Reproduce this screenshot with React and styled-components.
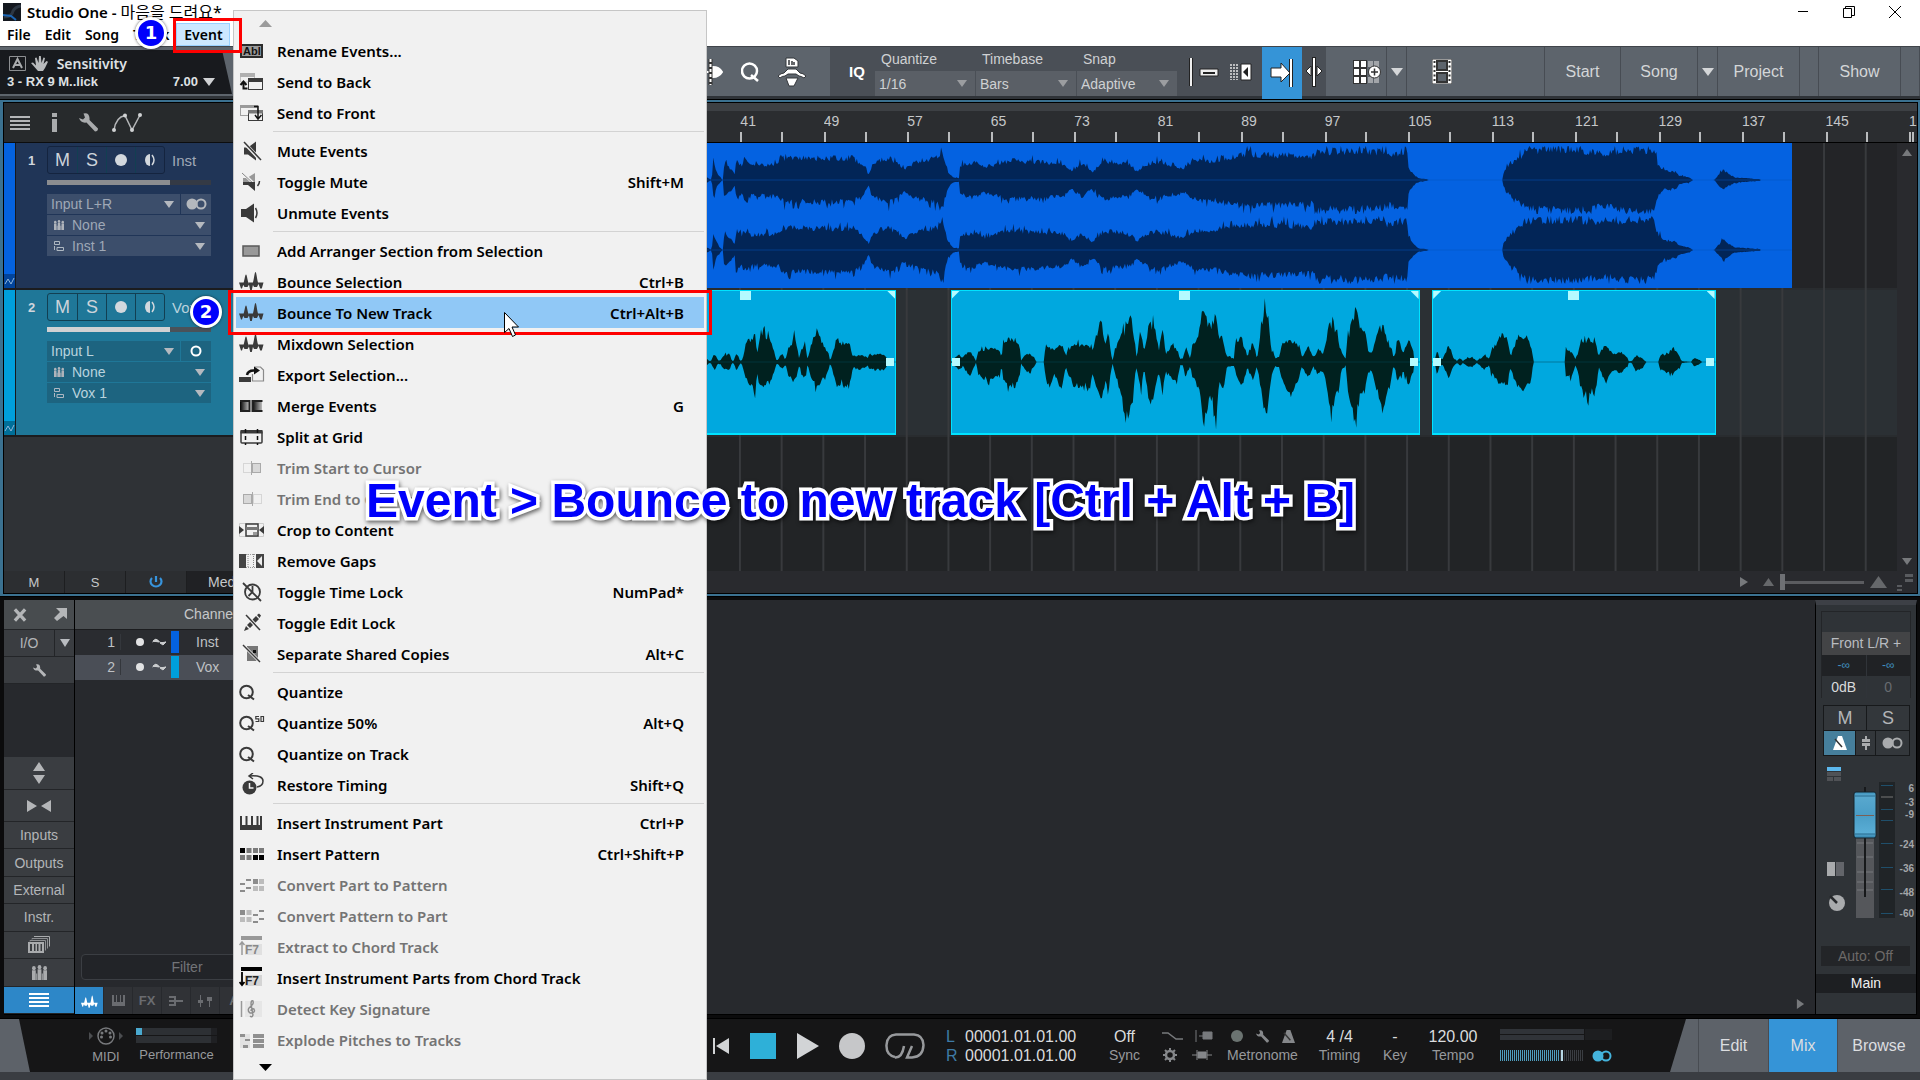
import React from 'react';
import styled, { createGlobalStyle, css } from 'styled-components';

const uiFont = '"Liberation Sans", "Noto Sans CJK KR", sans-serif';
const systemFont = '"Noto Sans", "Noto Sans CJK KR", sans-serif';

const GlobalStyle = createGlobalStyle`
  * { box-sizing: border-box; }
  body { margin: 0; background: #0b0b0c; font-family: ${uiFont}; font-size: 14px; color: #b9bcc0; }
  button, select, input { font: inherit; color: inherit; margin: 0; padding: 0; border: 0; background: none; border-radius: 0; }
  ul { list-style: none; margin: 0; padding: 0; }
  svg { display: block; flex: none; }
`;

/* ---------- data ---------- */

const TOTAL_BARS = 151;

const menuGroups = [
  [
    { label: 'Rename Events...', icon: 'rename' },
    { label: 'Send to Back', icon: 'back' },
    { label: 'Send to Front', icon: 'front' },
  ],
  [
    { label: 'Mute Events', icon: 'mute' },
    { label: 'Toggle Mute', icon: 'toggleMute', keys: 'Shift+M' },
    { label: 'Unmute Events', icon: 'unmute' },
  ],
  [
    { label: 'Add Arranger Section from Selection', icon: 'arranger' },
    { label: 'Bounce Selection', icon: 'bounce', keys: 'Ctrl+B' },
    { label: 'Bounce To New Track', icon: 'bounce', keys: 'Ctrl+Alt+B', active: true },
    { label: 'Mixdown Selection', icon: 'bounce' },
    { label: 'Export Selection...', icon: 'exportSel' },
    { label: 'Merge Events', icon: 'merge', keys: 'G' },
    { label: 'Split at Grid', icon: 'split' },
    { label: 'Trim Start to Cursor', icon: 'trimStart', disabled: true },
    { label: 'Trim End to Cursor', icon: 'trimEnd', disabled: true },
    { label: 'Crop to Content', icon: 'crop' },
    { label: 'Remove Gaps', icon: 'gaps' },
    { label: 'Toggle Time Lock', icon: 'timeLock', keys: 'NumPad*' },
    { label: 'Toggle Edit Lock', icon: 'editLock' },
    { label: 'Separate Shared Copies', icon: 'separate', keys: 'Alt+C' },
  ],
  [
    { label: 'Quantize', icon: 'quantize' },
    { label: 'Quantize 50%', icon: 'quantize50', keys: 'Alt+Q' },
    { label: 'Quantize on Track', icon: 'quantize' },
    { label: 'Restore Timing', icon: 'restore', keys: 'Shift+Q' },
  ],
  [
    { label: 'Insert Instrument Part', icon: 'keys', keys: 'Ctrl+P' },
    { label: 'Insert Pattern', icon: 'pattern', keys: 'Ctrl+Shift+P' },
    { label: 'Convert Part to Pattern', icon: 'toPattern', disabled: true },
    { label: 'Convert Pattern to Part', icon: 'toPart', disabled: true },
    { label: 'Extract to Chord Track', icon: 'chordUp', disabled: true },
    { label: 'Insert Instrument Parts from Chord Track', icon: 'chordDown' },
    { label: 'Detect Key Signature', icon: 'clef', disabled: true },
    { label: 'Explode Pitches to Tracks', icon: 'explode', disabled: true },
  ],
];

// [x, peak above the centre line, peak below it]
const instWave = [
  [-953, 8], [-600, 16], [-300, 20], [-60, 14], [18, 3], [30, 0], [34, 20], [45, 6], [58, 0], [62, 21], [75, 14], [88, 7],
  [92, 23], [105, 18], [120, 25], [130, 18], [200, 19], [210, 26], [300, 26], [390, 26], [410, 18], [428, 6], [435, 18],
  [450, 22], [478, 27], [500, 20], [520, 14], [540, 20], [560, 23], [600, 27], [613, 36], [620, 22], [628, 9], [640, 3],
  [655, 2], [657, 17], [690, 21], [720, 15], [780, 23], [850, 22], [920, 19], [940, 10], [965, 20], [993, 9], [1020, 23],
  [1090, 18], [1105, 10], [1130, 19], [1160, 22], [1220, 14], [1250, 23], [1290, 23], [1350, 28], [1400, 31], [1440, 29],
  [1470, 30], [1550, 28], [1562, 37], [1580, 34], [1717, 34], [1747, 30], [1788, 36], [1792, 15], [1802, 8], [1817, 2], [1839, 1],
  [1841, 0], [2029, 0], [2032, 8], [2047, 18], [2067, 24], [2087, 34], [2137, 36], [2217, 36], [2287, 31], [2347, 36],
  [2412, 34], [2422, 20], [2437, 11], [2467, 10], [2477, 5], [2502, 3], [2511, 0], [2565, 0], [2572, 4], [2587, 12],
  [2602, 7], [2617, 3], [2682, 1], [2683, 0], [2761, 0],
];

const voxA = [
  [-265, 0], [-200, 20], [-100, 14], [10, 6], [18, 4], [24, 1], [28, 1], [37, 10], [46, 2], [52, 2], [60, 8], [75, 9], [82, 1], [86, 2],
  [93, 10], [103, 1], [108, 3], [115, 19], [130, 27], [140, 35, 39], [145, 9], [150, 26], [163, 33, 27], [180, 24], [190, 9],
  [195, 1], [200, 4], [210, 9], [217, 2], [222, 14], [240, 28, 24], [250, 8], [252, 2], [257, 16], [268, 18], [272, 4], [276, 8],
  [282, 20], [297, 38, 31], [310, 22], [325, 11], [330, 1], [335, 8], [347, 28], [360, 22], [378, 20, 30], [388, 6], [392, 7],
  [405, 9], [420, 6], [424, 3], [428, 8], [445, 9], [465, 9], [473, 5], [474, 0], [497, 0],
];

const voxB = [
  [636, 0], [652, 8], [658, 8], [666, 5], [683, 14, 17], [695, 5], [699, 1], [705, 14], [720, 14, 19], [742, 16, 21], [760, 14],
  [764, 4], [768, 24], [780, 26], [800, 27, 29], [810, 15], [813, 2], [820, 7], [832, 10, 13], [845, 6], [852, 0], [870, 0],
  [875, 19], [885, 16, 28], [895, 15], [915, 19, 28], [926, 6], [930, 14], [950, 22, 28], [965, 19, 28], [988, 18, 28], [992, 14],
  [1003, 30, 28], [1015, 40, 48], [1025, 24], [1033, 33, 36], [1042, 4], [1044, 2], [1050, 15], [1065, 34], [1072, 33, 58],
  [1080, 41, 54], [1090, 52, 58], [1097, 36], [1102, 10], [1105, 6], [1110, 20], [1115, 40, 33], [1124, 8], [1130, 30],
  [1137, 44, 50], [1150, 42, 38], [1160, 12], [1170, 38, 36], [1178, 10], [1185, 14], [1195, 22], [1205, 13, 26], [1215, 4],
  [1222, 4], [1228, 18], [1240, 4], [1245, 17], [1258, 28], [1265, 40], [1272, 66, 74], [1285, 43, 48], [1295, 42], [1303, 60, 72],
  [1312, 26], [1325, 22, 30], [1332, 6], [1340, 5], [1350, 4], [1355, 26, 13], [1370, 27], [1385, 6], [1390, 16], [1402, 17],
  [1408, 4], [1412, 14], [1422, 48, 45], [1433, 62, 60], [1445, 14], [1455, 5], [1465, 6], [1470, 21], [1485, 24, 32],
  [1495, 25, 38], [1515, 18], [1522, 5], [1537, 20], [1552, 5], [1562, 15], [1575, 10], [1579, 15], [1589, 40, 50],
  [1599, 48, 54], [1612, 29, 37], [1622, 10], [1632, 4], [1637, 28], [1647, 44, 54], [1657, 64, 68], [1667, 42],
  [1680, 38, 34], [1690, 10], [1697, 10], [1712, 32, 34], [1725, 44, 58], [1737, 24, 38], [1749, 16], [1753, 3], [1765, 26, 23],
  [1777, 10], [1792, 27], [1804, 10], [1805, 0], [1820, 0],
];

const voxC = [
  [1851, 0], [1857, 0], [1864, 14], [1871, 3], [1879, 4], [1892, 19], [1905, 5], [1915, 1], [1922, 5], [1929, 1], [1937, 4],
  [1952, 6], [1964, 1], [1972, 4], [1985, 8], [1995, 4], [2002, 14], [2017, 24, 22], [2029, 34, 27], [2042, 26], [2050, 6],
  [2062, 23, 26], [2077, 29, 33], [2089, 32, 29], [2102, 20], [2107, 4], [2108, 0], [2187, 0], [2190, 14], [2202, 13, 19],
  [2214, 4], [2219, 8], [2227, 25, 30], [2247, 26, 40], [2267, 22, 31], [2273, 6], [2282, 15], [2292, 21, 26], [2302, 13],
  [2312, 10], [2332, 11, 13], [2347, 4], [2349, 1], [2357, 1], [2367, 7, 11], [2382, 5, 7], [2394, 0], [2424, 0], [2429, 9],
  [2447, 9, 13], [2462, 17, 12], [2477, 7], [2484, 1], [2507, 0], [2515, 5], [2527, 3], [2535, 0], [2569, 0],
];

const tracks = [
  {
    number: 1, name: 'Inst', tone: 'inst', input: 'Input L+R', stereo: true, output: 'Inst 1',
    clips: [{ from: 1, to: 141.9, span: [-953, 2761], wave: instWave, centers: [37, 107], cap: 34 }],
  },
  {
    number: 2, name: 'Vox', tone: 'vox', input: 'Input L', stereo: false, output: 'Vox 1',
    clips: [
      { from: 27.1, to: 56, span: [-265, 497], wave: voxA, centers: [72], cap: 69 },
      { from: 61.2, to: 106.2, span: [636, 1820], wave: voxB, centers: [72], cap: 69 },
      { from: 107.4, to: 134.6, span: [1851, 2569], wave: voxC, centers: [72], cap: 69 },
    ],
  },
];

const tones = {
  inst: { strip: '#0462df', header: '#203557', field: '#3c4e6b', clip: '#0462e1', wave: '#022557', line: '#0353bd', text: '#9fa8b6', level: '#8b8d90', rest: '#343a45', edge: '#14243f' },
  vox: { strip: '#009fdb', header: '#1f7798', field: '#1d6480', clip: '#00a8df', wave: '#00211f', line: '#044a56', text: '#b9d3de', level: '#d0d1d3', rest: '#4a5259', edge: '#123f52' },
};

/* ---------- wave form ---------- */

function makeRandom(seed) {
  let s = seed * 7919 + 101;
  return () => {
    s = (s * 16807) % 2147483647;
    return s / 2147483647;
  };
}

function envelopePath(points, center, cap, seed) {
  const random = makeRandom(seed);
  // most samples sit a little under the envelope, a few poke out of it
  const noise = () => 0.72 + 0.24 * random() + (random() > 0.9 ? 0.22 : 0);
  const up = [];
  const down = [];
  let i = 0;
  const last = points[points.length - 1][0];
  for (let x = points[0][0]; x < last; x += 3) {
    while (points[i + 1][0] <= x) i += 1;
    const [x0, u0, d0 = u0] = points[i];
    const [x1, u1, d1 = u1] = points[i + 1];
    const t = (x - x0) / (x1 - x0);
    up.push(`${x} ${(center - Math.min(cap, (u0 + (u1 - u0) * t) * noise())).toFixed(1)}`);
    down.push(`${x} ${(center + Math.min(cap, (d0 + (d1 - d0) * t) * noise())).toFixed(1)}`);
  }
  return `M${up.join('L')}L${down.reverse().join('L')}Z`;
}

/* ---------- icons ---------- */

const dark = '#3a3a3a';

const waveShape = 'M0 12.5h5L3 18.5H2zM4 14.5C5.500 11 6 4.500 7 4.500S8.500 11 10 14.500L8.500 17H5.500zM9.500 12.500h5L12.800 20h-1.600zM13.500 14C15 10 15.500 2 16.500 2S18 10 19.500 14L18 17h-3zM19 12.500h5.500L22.800 18.500h-1.600z';

const menuIcons = {
  rename: (
    <>
      <rect x="2" y="6" width="21" height="12" fill="#9a9a9a" stroke="#2c2c2c" strokeWidth="2" />
      <text x="4" y="16" fontSize="11" fontFamily="Liberation Sans" fill="#111">Abl</text>
    </>
  ),
  back: (
    <>
      <path d="M1.500 4h14v8h-14z" fill="none" stroke="#c2c2c2" />
      <path d="M1 3h15v4H1z" fill="#b0b0b0" />
      <rect x="9.500" y="8.500" width="14" height="11" fill="#f1f1f1" stroke={dark} />
      <path d="M9 8h15v4H9z" fill={dark} />
      <path d="M4.500 12v6.500h4M1.500 15l3-3.500 3 3.500" fill="none" stroke="#111" strokeWidth="2" />
    </>
  ),
  front: (
    <>
      <rect x="1.500" y="4.500" width="17" height="10" fill="#f1f1f1" stroke="#a0a0a0" />
      <path d="M1 4h18v3H1z" fill="#9a9a9a" />
      <rect x="9.500" y="9.500" width="14" height="10" fill="#f1f1f1" stroke={dark} />
      <path d="M9 9h15v3.500H9z" fill="#777" />
      <path d="M15 5.500h4V17M16 14l3 4 3.500-4" fill="none" stroke="#111" strokeWidth="1.500" />
    </>
  ),
  mute: (
    <>
      <path d="M5 8.500h4l8-6v19l-8-6H5z" fill={dark} />
      <path d="M5 3.500l17 18" stroke="#f1f1f1" strokeWidth="3.500" />
      <path d="M5 3l17 18" stroke={dark} strokeWidth="1.500" />
    </>
  ),
  toggleMute: (
    <>
      <path d="M4 8h4l8-5v9H4z" fill="#999" />
      <path d="M4 3l12 12" stroke="#f1f1f1" strokeWidth="3" />
      <path d="M3 3l13 12" stroke="#888" />
      <path d="M4 12h12v9l-7-6H4z" fill={dark} />
      <path d="M18.500 16q2-2 2-5" fill="none" stroke={dark} strokeWidth="1.500" />
    </>
  ),
  unmute: (
    <>
      <path d="M2 8h5l8-5.500v19L7 16H2z" fill={dark} />
      <path d="M16.500 7q3 5 0 10" fill="none" stroke={dark} strokeWidth="1.500" />
    </>
  ),
  arranger: <rect x="4" y="7" width="16" height="10" fill="#999" stroke="#5a5a5a" strokeWidth="1.500" />,
  bounce: <path d={waveShape} fill={dark} />,
  exportSel: (
    <>
      <path d="M15.500 4h6l3 3v11h-11v-7" fill="#f1f1f1" stroke="#8a8a8a" strokeWidth="1.200" />
      <path d="M0 14h12v5H0z" fill={dark} />
      <path d="M8 12q1-5 8-4.500" fill="none" stroke="#111" strokeWidth="2.500" />
      <path d="M15 3.500l6 4-6 4z" fill="#111" />
    </>
  ),
  merge: (
    <>
      <defs>
        <linearGradient id="mergeA"><stop offset="0" stopColor="#000" /><stop offset="1" stopColor="#bbb" /></linearGradient>
        <linearGradient id="mergeB"><stop offset="0" stopColor="#111" /><stop offset="1" stopColor="#bbb" /></linearGradient>
      </defs>
      <rect x="1" y="7" width="9" height="10" fill="url(#mergeA)" />
      <rect x="14" y="7" width="9" height="10" fill="url(#mergeB)" />
      <path d="M1 7h9.500v10H1M23.500 7H13.500v10h10" fill="none" stroke="#222" strokeWidth="2" />
    </>
  ),
  split: (
    <>
      <rect x="2" y="6" width="21" height="12" fill="none" stroke={dark} strokeWidth="1.500" rx="1" />
      <path d="M1.500 5h22v3.500h-22z" fill={dark} />
      <path d="M6.500 4v16M18.500 4v16" stroke="#111" strokeWidth="1.500" strokeDasharray="4 3" />
    </>
  ),
  trimStart: (
    <>
      <path d="M4.500 7.500h8v9h-8z" fill="none" stroke="#bbb" strokeDasharray="1 1" />
      <rect x="13.500" y="7.500" width="8" height="9" fill="#d8d8d8" stroke="#aaa" />
      <path d="M12.500 5v14" stroke="#aaa" />
    </>
  ),
  trimEnd: (
    <>
      <path d="M14.500 7.500h8v9h-8z" fill="none" stroke="#bbb" strokeDasharray="1 1" />
      <rect x="4.500" y="7.500" width="8" height="9" fill="#d8d8d8" stroke="#aaa" />
      <path d="M13.500 5v14" stroke="#aaa" />
    </>
  ),
  crop: (
    <>
      <path d="M.5 5.500h24v13h-24z" fill="none" stroke="#ccc" />
      <rect x="7" y="6" width="12" height="12" fill="#f1f1f1" stroke={dark} strokeWidth="1.500" />
      <path d="M7 9h12v3H7z" fill="#777" />
      <path d="M14 14h4v3h-4z" fill="#999" />
      <path d="M0 8l5 4-5 4zM25 8l-5 4 5 4z" fill={dark} />
    </>
  ),
  gaps: (
    <>
      <path d="M0 5h7v14H0zM17 5h8v14h-8z" fill="#444" />
      <path d="M9 5v14M14.500 5v14" stroke="#888" strokeDasharray="1 1" />
      <path d="M7 5.500h10M7 18.500h10" stroke="#999" strokeDasharray="1 1" />
      <path d="M23 7v10l-5-5z" fill="#eee" />
    </>
  ),
  timeLock: (
    <>
      <circle cx="13.500" cy="12" r="7.500" fill="none" stroke={dark} strokeWidth="1.800" />
      <path d="M13.500 6v6l-4 4M4 3l18 18" fill="none" stroke={dark} strokeWidth="1.800" />
    </>
  ),
  editLock: (
    <>
      <path d="M5 20l2-5 3 3zM8 14l9-9 3 3-9 9zM18 4l2-1.500 2 2L20.500 7z" fill={dark} />
      <path d="M7 4l14 15" stroke="#f1f1f1" strokeWidth="3.500" />
      <path d="M7 4l14 15" stroke={dark} strokeWidth="1.500" />
    </>
  ),
  separate: (
    <>
      <path d="M8 4h11v13l-2 2H8z" fill="#777" />
      <rect x="14" y="8" width="3" height="3" fill="#111" />
      <path d="M4 3l17 17" stroke="#f1f1f1" strokeWidth="3" />
      <path d="M4 3l17 17" stroke={dark} strokeWidth="1.500" />
    </>
  ),
  quantize: (
    <>
      <circle cx="7.500" cy="12" r="6.300" fill="none" stroke={dark} strokeWidth="2" />
      <path d="M9 15l6 4.500" stroke={dark} strokeWidth="2" />
    </>
  ),
  quantize50: (
    <>
      <circle cx="7.500" cy="12" r="6.300" fill="none" stroke={dark} strokeWidth="2" />
      <path d="M9 15l6 4.500" stroke={dark} strokeWidth="2" />
      <path d="M20 5.500h-3.200v2.300h3v2.700h-3.300M22 5.500h2.500v5H22z" fill="none" stroke={dark} strokeWidth="1.200" />
    </>
  ),
  restore: (
    <>
      <circle cx="10.500" cy="14.500" r="7" fill={dark} />
      <path d="M10.500 10v5h4" fill="none" stroke="#f1f1f1" strokeWidth="1.500" />
      <path d="M11 3q13-1 13 5 0 5-6 6M14 0l-4 3 4 3" fill="none" stroke={dark} strokeWidth="1.500" />
    </>
  ),
  keys: <path d="M1 5h2v9h3.500V5h2v9H12V5h2v9h3.500V5h2v9H21V5h2v14H1z" fill={dark} />,
  pattern: (
    <>
      <path d="M1 6h5v5H1zM14 13h5v5h-5zM20 13h5v5h-5z" fill="#000" />
      <path d="M7.500 6h5v5h-5zM14 6h5v5h-5zM20 6h5v5h-5zM1 13h5v5H1zM7.500 13h5v5h-5z" fill="#7b7b7b" />
    </>
  ),
  toPattern: (
    <>
      <path d="M1 10h5v2H1zM7 6h5v2H7zM7 14h5v2H7zM1 17h5v2H1zM14 6h5v5h-5z" fill="#8c8c8c" />
      <path d="M20 6h5v5h-5zM14 13h5v5h-5zM20 13h5v5h-5z" fill="#bcbcbc" />
    </>
  ),
  toPart: (
    <>
      <path d="M1 6h5v5H1zM14 10h5v2h-5zM20 6h5v2h-5zM20 14h5v2h-5zM14 17h5v2h-5z" fill="#8c8c8c" />
      <path d="M7.500 6h5v5h-5zM1 13h5v5H1zM7.500 13h5v5h-5z" fill="#bcbcbc" />
    </>
  ),
  chordUp: (
    <>
      <path d="M6 9h17v11H6z" fill="#e0e0e0" />
      <path d="M2 1h21v4H2z" fill="#999" />
      <path d="M3 20V8M.5 10L3 7l2.500 3" fill="none" stroke="#999" strokeWidth="1.500" />
      <text x="6" y="19" fontSize="12" fontFamily="Liberation Sans" fill="#888">F7</text>
    </>
  ),
  chordDown: (
    <>
      <path d="M6 9h17v11H6z" fill="#d4d4d4" />
      <path d="M2 1h21v4H2z" fill="#000" />
      <path d="M3 6v12M.5 16L3 19l2.500-3" fill="none" stroke="#000" strokeWidth="1.800" />
      <text x="6" y="19" fontSize="12" fontFamily="Liberation Sans" fill="#222">F7</text>
    </>
  ),
  clef: (
    <>
      <path d="M6 4h17v16H6z" fill="#e6e6e6" />
      <path d="M2.500 4v16" stroke="#999" strokeWidth="1.500" />
      <path d="M11 19q2 2 3-1L12 7q0-4 2-3 1 3-2 5-5 4-1 7 6 0 4-4-3-1-3 2" fill="none" stroke="#8c8c8c" strokeWidth="1.400" />
    </>
  ),
  explode: (
    <>
      <path d="M1 6h10v14H1z" fill="#e2e2e2" />
      <path d="M1 6h5v3H1zM6 11h5v2H6zM4 17h5v3H4zM14 6h11v4H14zM14 11h11v4H14zM14 16h11v4H14z" fill="#909090" />
    </>
  ),
};

const MenuIcon = ({ name }) => (
  <svg width="26" height="24" viewBox="0 0 26 24" aria-hidden="true">{menuIcons[name]}</svg>
);

const shapes = {
  down: 'M0 0h10L5 8z',
  up: 'M0 8h10L5 0z',
  right: 'M1 0l8 4-8 4z',
};

const Triangle = ({ dir = 'down', w = 10, h = 8, color = '#b9bcc0' }) => (
  <svg width={w} height={h} viewBox="0 0 10 8" preserveAspectRatio="none" aria-hidden="true">
    <path d={shapes[dir]} fill={color} />
  </svg>
);

const Bars = ({ color = '#b4b6b8' }) => (
  <svg width="20" height="14" viewBox="0 0 20 14"><path d="M0 0h20v2H0zM0 4h20v2H0zM0 8h20v2H0zM0 12h20v2H0z" fill={color} /></svg>
);

const Wrench = ({ size = 19, color = '#a9abad' }) => (
  <svg width={size} height={size} viewBox="0 0 19 19">
    <path d="M0 5l4 1.500 2-2L4.500.5Q10-1 10.500 5v2L19 15.500q0 3-3 3L7.500 9.500Q2 10.500 0 5z" fill={color} />
  </svg>
);

const People = ({ size = 16, color = '#aeb3ba' }) => (
  <svg width={size} height={size} viewBox="0 0 16 14" preserveAspectRatio="none">
    <path d="M0 5h4v9H0zM6 4h4v10H6zM12 5h4v9h-4zM4.500 8h1v6h-1zM10.500 8h1v6h-1z" fill={color} />
    <circle cx="2" cy="3" r="2" fill={color} />
    <circle cx="8" cy="2" r="2" fill={color} />
    <circle cx="14" cy="3" r="2" fill={color} />
  </svg>
);

const Blocks = () => (
  <svg width="10" height="10" viewBox="0 0 10 10"><path d="M.5.5h5v3h-5zM.5 5v4M3 6.500h6.500v3H3z" fill="none" stroke="#aeb8c2" /></svg>
);

const Rings = ({ color = '#b4b8bd', stereo = true }) => (
  <svg width="21" height="12" viewBox="0 0 21 12">
    {stereo && <circle cx="6" cy="6" r="5.500" fill={color} />}
    <circle cx={stereo ? 15 : 10} cy="6" r="4.500" fill="none" stroke={color} strokeWidth="2" />
  </svg>
);

const Metronome = ({ color = '#a0a2a4', size = 14 }) => (
  <svg width={size} height={size} viewBox="0 0 14 14">
    <path d="M5 0h4l5 14H0z" fill={color} />
    <path d="M2 3l7 8" stroke="#333" strokeWidth="1.500" />
  </svg>
);

const WaveMark = () => (
  <svg width="17" height="14" viewBox="0 0 25 20"><path d={waveShape} fill="#fff" /></svg>
);

/* ---------- window chrome ---------- */

const Screen = styled.div`
  position: relative;
  display: flex;
  flex-direction: column;
  min-height: 100vh;
  overflow: hidden;
`;

const TitleBar = styled.header`
  display: flex;
  align-items: center;
  height: 23px;
  padding: 0 19px 0 3px;
  gap: 6px;
  background: #fff;
  color: #000;
  font: 600 15px/20px ${systemFont};
`;

const SongName = styled.span`
  font-size: 16px;
  font-weight: 400;
`;

const WindowButtons = styled.div`
  display: flex;
  gap: 34px;
  margin-left: auto;
`;

const PlainButton = styled.button`
  display: flex;
  align-items: center;
  justify-content: center;
  cursor: pointer;
`;

const MenuBar = styled.nav`
  display: flex;
  height: 23px;
  background: #fff;
  color: #000;
  font: 600 14px/20px ${systemFont};
`;

const MenuBarItem = styled.button`
  padding: 0 6px;
  border: 1px solid ${(p) => (p.$open ? '#99d1ff' : 'transparent')};
  background: ${(p) => (p.$open ? '#cce8ff' : 'none')};
  min-width: ${(p) => (p.$open ? '54px' : '0')};
`;

/* ---------- toolbar ---------- */

const Toolbar = styled.div`
  display: flex;
  height: 53px;
  border-top: 1px solid #40444a;
  border-bottom: 3px solid #2f3338;
  background: #5d646c;
`;

const ParameterBox = styled.div`
  display: flex;
  flex-direction: column;
  justify-content: center;
  gap: 1px;
  width: 232px;
  margin: 3px 0 2px;
  padding: 0 17px 0 7px;
  background: #181a1e;
  clip-path: polygon(0 0, 222px 0, 100% 100%, 0 100%);
  color: #dfe1e4;
  font-weight: bold;
  font-size: 13px;
  line-height: 16px;
`;

const ParameterRow = styled.div`
  display: flex;
  align-items: center;
  gap: 5px;
`;

const ParameterTitle = styled(ParameterRow)`
  padding-left: 2px;
  font: 600 14px/18px ${systemFont};
`;

const Push = styled.span`
  margin-left: auto;
`;

const ToolStrip = styled.div`
  display: flex;
  align-items: center;
  justify-content: flex-end;
  gap: 18px;
  width: 598px;
  padding-right: 23px;
`;

const SnapStrip = styled.div`
  display: flex;
  align-items: center;
  width: 432px;
  padding-left: 12px;
  background: #4a4f56;
`;

const IqMark = styled.span`
  width: 33px;
  padding-left: 7px;
  color: #fff;
  font-weight: bold;
  font-size: 15px;
`;

const Field = styled.label`
  display: flex;
  flex-direction: column;
  justify-content: flex-end;
  align-self: stretch;
  width: 101px;
  padding-right: 1px;
  color: #cfd1d3;
  line-height: 24px;
`;

const FieldName = styled.span`
  padding-left: 6px;
`;

const SelectBox = styled.span`
  display: grid;
  flex: 1 1 auto;
  align-items: center;
  background: ${(p) => p.$bg || 'none'};
  & > * { grid-area: 1 / 1; }
  & > svg { justify-self: end; margin-right: ${(p) => p.$caret || 6}px; pointer-events: none; }
`;

const Select = styled.select`
  appearance: none;
  width: 100%;
  height: ${(p) => p.$h || 24}px;
  padding-left: ${(p) => p.$indent || 4}px;
`;

const SnapTools = styled.div`
  display: flex;
  align-items: center;
  gap: 11px;
  padding-left: 11px;
`;

const SnapToggle = styled(PlainButton)`
  width: 40px;
  margin-bottom: -3px;
  background: #3594d7;
`;

const SnapSplit = styled(PlainButton)`
  width: 24px;
  background: #4a4f56;
`;

const ToolCell = styled.button`
  display: flex;
  align-items: center;
  justify-content: center;
  width: ${(p) => p.$w}px;
  padding-left: ${(p) => p.$pl || 0}px;
  padding-top: 1px;
  border-right: 1px solid #474c53;
  color: #d4d6d8;
  font-size: 16px;
`;

const ToolSpace = styled.div`
  flex: 1;
  display: flex;
  align-items: center;
  padding-left: 25px;
  border-right: 1px solid #474c53;
`;

/* ---------- arrangement ---------- */

const Arrange = styled.section`
  display: flex;
  margin-top: 1px;
  border: solid #3b7190;
  border-width: 2px 2px 2px 3px;
  outline: 1px solid #000;
  background: #000;
  padding: 1px;
`;

const TrackList = styled.div`
  display: flex;
  flex-direction: column;
  flex: none;
  width: 319px;
`;

const TrackTools = styled.div`
  display: flex;
  align-items: center;
  gap: 22px;
  height: 40px;
  padding-left: 6px;
  border-bottom: 1px solid #0c0d0e;
  background: #272a2c;
`;

const ToolPair = styled.div`
  display: flex;
  align-items: center;
  gap: 14px;
`;

const TrackHeader = styled.div`
  display: flex;
  height: 147px;
  border-bottom: 2px solid #1b1c1f;
  background: ${(p) => p.$tone.header};
  color: ${(p) => p.$tone.text};
`;

const TrackStrip = styled.div`
  display: flex;
  align-items: flex-end;
  width: 12px;
  border-right: 1px solid #15181d;
  background: ${(p) => p.$tone.strip};
`;

const TrackNumber = styled.strong`
  width: 31px;
  padding-top: 10px;
  text-align: center;
  font-size: 13px;
  line-height: 16px;
  color: #d0d6dd;
`;

const TrackBody = styled.div`
  display: flex;
  flex-direction: column;
  width: 164px;
  padding-top: 3px;
`;

const TrackRow = styled.div`
  display: flex;
  align-items: center;
  gap: 7px;
  font-size: 15px;
`;

const ButtonGroup = styled.div`
  display: flex;
  height: 28px;
  border: 1px solid ${(p) => p.$tone.edge};
  border-radius: 3px;
  color: #cdd3da;
  font-size: 18px;
`;

const GroupButton = styled(PlainButton)`
  width: 29px;
  & + & { border-left: 1px solid ${(p) => p.$tone.edge}; }
`;

const Level = styled.div`
  width: 164px;
  height: 5px;
  margin: 6px 0 9px;
  background: linear-gradient(90deg, ${(p) => p.$tone.level} 75%, ${(p) => p.$tone.rest} 75%);
`;

const InputRow = styled.div`
  display: flex;
  gap: 1px;
  margin-bottom: 1px;
`;

const RouteRow = styled.div`
  display: flex;
  align-items: center;
  height: 20px;
  margin-bottom: 1px;
  padding-left: 7px;
  gap: 2px;
  background: ${(p) => p.$tone.field};
`;

const RingButton = styled(PlainButton)`
  width: 30px;
  background: ${(p) => p.$tone.field};
`;

const TrackFill = styled.div`
  flex: 1;
  min-height: 134px;
  background: #2f3236;
`;

const TrackFooter = styled.div`
  display: flex;
  height: 22px;
  background: #202124;
  color: #c6c8ca;
  font-size: 13px;
`;

const FooterButton = styled(PlainButton)`
  width: 61px;
  border-right: 1px solid #1d1e20;
  background: #2c2e31;
`;

const FooterTab = styled(PlainButton)`
  padding-left: 21px;
  font-size: 14px;
`;

const Timeline = styled.div`
  display: flex;
  flex-direction: column;
  flex: 1;
  min-width: 0;
`;

const Ruler = styled.div`
  display: grid;
  grid-template-columns: repeat(19, 1fr) 8px;
  height: 40px;
  border-top: 8px solid #3d4044;
  border-bottom: 1px solid #000;
  background: #2b2d30;
  color: #c5c7c9;
`;

const RulerCell = styled.div`
  overflow: hidden;
  line-height: 21px;
  background:
    linear-gradient(#b9bbbd, #b9bbbd) 0 100% / 2px 10px no-repeat,
    linear-gradient(#b9bbbd, #b9bbbd) 50% 100% / 2px 10px no-repeat;
`;

const LaneRow = styled.div`
  display: flex;
  flex: 1;
`;

const Lanes = styled.div`
  position: relative;
  flex: 1;
  background: #222426;
`;

const GridLines = styled.svg`
  position: absolute;
  inset: 0;
  width: 100%;
  height: 100%;
`;

const Lane = styled.div`
  height: 147px;
  border-bottom: 2px solid #292c2f;
  background: ${(p) => (p.$selected ? '#2b3034' : '#232427')};
`;

const ClipLayer = styled.div`
  position: absolute;
  top: ${(p) => p.$index * 147}px;
  left: 0;
  right: 0;
  height: 145px;
`;

const Clip = styled.div`
  position: absolute;
  top: 0;
  bottom: 0;
  background: ${(p) => p.$tone.clip};
  ${(p) => p.$selected && css`
    box-shadow: inset 0 -2px #00e3ff, inset 0 0 0 1px #00e3ff;
  `}
`;

const Wave = styled.svg`
  width: 100%;
  height: 100%;
`;

const Handle = styled.i`
  position: absolute;
  background: #b4faff;
  ${(p) => p.$at === 'top' && css`top: 1px; left: calc(50% - 6px); width: 11px; height: 9px;`}
  ${(p) => p.$at === 'left' && css`top: 68px; left: 1px; width: 8px; height: 8px;`}
  ${(p) => p.$at === 'right' && css`top: 68px; right: 2px; width: 8px; height: 8px;`}
  ${(p) => p.$at === 'fadeIn' && css`top: 1px; left: 1px; width: 8px; height: 8px; clip-path: polygon(0 0, 100% 0, 0 100%);`}
  ${(p) => p.$at === 'fadeOut' && css`top: 1px; right: 1px; width: 8px; height: 8px; clip-path: polygon(0 0, 100% 0, 100% 100%);`}
`;

const ScrollColumn = styled.div`
  display: flex;
  flex-direction: column;
  align-items: center;
  justify-content: space-between;
  width: 20px;
  padding: 6px 0;
  background: #292a2e;
`;

const TimelineFooter = styled.div`
  display: flex;
  align-items: center;
  justify-content: flex-end;
  gap: 6px;
  height: 22px;
  padding-right: 4px;
  background: #292a2e;
`;

const ZoomOut = styled(PlainButton)`
  padding-left: 8px;
`;

const ZoomSlider = styled.input`
  appearance: none;
  width: 84px;
  height: 16px;
  background: linear-gradient(#5b5c60, #5b5c60) 0 50% / 100% 3px no-repeat;
  &::-webkit-slider-thumb {
    appearance: none;
    width: 5px;
    height: 16px;
    background: #6e7074;
  }
`;

/* ---------- mixer ---------- */

const Mixer = styled.section`
  display: flex;
  flex: 1;
  margin: 4px 3px 3px 4px;
  border-bottom: 1px solid #000;
  background: #27292d;
`;

const SideColumn = styled.div`
  display: flex;
  flex-direction: column;
  width: 71px;
  border-right: 1px solid #000;
`;

const SideCell = styled(PlainButton)`
  flex: ${(p) => (p.$h ? 'none' : '1 1 auto')};
  height: ${(p) => p.$h || 26}px;
  border-bottom: 1px solid #232528;
  background: ${(p) => p.$bg || '#3a3d41'};
  color: #b3b5b8;
`;

const SideHead = styled.div`
  display: flex;
  align-items: center;
  justify-content: space-between;
  height: 30px;
  padding: 0 7px 0 9px;
  border-bottom: 1px solid #232528;
  background: #484c4f;
`;

const SideSplit = styled.div`
  display: flex;
  height: 27px;
  border-bottom: 1px solid #232528;
  background: #3a3d41;
`;

const IoButton = styled(PlainButton)`
  flex: 1;
  border-right: 1px solid #232528;
  color: #b3b5b8;
`;

const IoList = styled(PlainButton)`
  width: 19px;
`;

const SideGap = styled.div`
  height: 73px;
`;

const ChannelColumn = styled.div`
  display: flex;
  flex-direction: column;
  width: 280px;
`;

const ChannelHead = styled.div`
  height: 30px;
  padding-left: 109px;
  border-bottom: 1px solid #1c1d1f;
  background: #4a4e51;
  line-height: 29px;
  color: #c6c8ca;
`;

const ChannelRow = styled.div`
  display: flex;
  align-items: center;
  height: 25px;
  padding-bottom: 2px;
  background: ${(p) => (p.$selected ? '#4a4e56' : '#2a2c30')};
  color: #bfc1c4;
`;

const ChannelNumber = styled.span`
  width: 46px;
  padding-right: 5px;
  margin-right: 15px;
  border-right: 1px solid #34373c;
  text-align: right;
`;

const ChannelColor = styled.i`
  width: 8px;
  align-self: stretch;
  margin: 1px 17px 0 5px;
  background: ${(p) => p.$color};
`;

const Filter = styled.input`
  width: 212px;
  height: 26px;
  margin: auto 6px 7px;
  border: 1px solid #3b3e43;
  border-radius: 4px;
  background: #222428;
  text-align: center;
  &::placeholder { color: #727478; opacity: 1; }
`;

const ChannelTabs = styled.div`
  display: flex;
  gap: 1px;
`;

const ChannelTab = styled(PlainButton)`
  width: 28px;
  height: 27px;
  background: ${(p) => (p.$active ? '#2d87c8' : '#303236')};
  color: #6a6c70;
  font-weight: bold;
  font-size: 13px;
`;

const MixerSpace = styled.div`
  display: flex;
  flex: 1;
  align-items: flex-end;
  justify-content: flex-end;
  padding: 5px 10px;
`;

const MainChannel = styled.div`
  display: flex;
  flex-direction: column;
  width: 102px;
  padding-bottom: 21px;
  border: solid #000;
  border-width: 0 1px;
  border-top: 5px solid #3d4046;
  background: #2f3337;
`;

const OutputBox = styled.div`
  margin: 6px 5px 0;
  border: 1px solid #232528;
  border-bottom: 0;
`;

const OutputName = styled.div`
  margin-top: 20px;
  background: #434446;
  line-height: 23px;
  text-align: center;
  white-space: nowrap;
`;

const Pair = styled.div`
  display: flex;
  background: ${(p) => p.$bg || 'none'};
  & > * { flex: 1; text-align: center; line-height: ${(p) => p.$line}px; }
  & > * + * { border-left: 1px solid #303439; }
`;

const PeakValue = styled.span`
  color: #3f8dbd;
  font-size: 12px;
`;

const Volume = styled.span`
  color: #d8dadc;
`;

const Muted = styled.span`
  color: #686b70;
`;

const MainButtons = styled.div`
  margin: 7px 6px 11px 7px;
  border: 1px solid #17191b;
  color: #b3b5b8;
`;

const ButtonLine = styled.div`
  display: flex;
  height: 24px;
  & + & { height: 25px; border-top: 1px solid #17191b; }
`;

const MainButton = styled(PlainButton)`
  flex: ${(p) => p.$grow || 1};
  background: ${(p) => (p.$active ? '#467f9c' : '#33373b')};
  font-size: 18px;
  & + & { border-left: 1px solid #17191b; }
`;

const FaderArea = styled.div`
  display: grid;
  & > * { grid-area: 1 / 1; }
`;

const FaderInput = styled.input`
  width: 22px;
  height: 140px;
  margin-left: 38px;
  opacity: 0;
  writing-mode: vertical-lr;
  direction: rtl;
`;

const AutoMode = styled.button`
  height: 20px;
  margin: auto 6px 8px 5px;
  background: #232528;
  color: #6d6a68;
`;

const MainName = styled.div`
  background: #1d1f22;
  color: #f0f0f0;
  line-height: 19px;
  text-align: center;
`;

/* ---------- transport ---------- */

const Transport = styled.footer`
  display: flex;
  height: 62px;
  border-top: 1px solid #000;
  border-bottom: 8px solid #3a3d42;
  background: #5d6269;
`;

const TransportFace = styled.div`
  display: flex;
  align-items: center;
  flex: 1;
  margin-left: 19px;
  padding-left: 71px;
  background: #161617;
  clip-path: polygon(0 0, 100% 0, calc(100% - 16px) 100%, 11px 100%);
  color: #97999c;
`;

const Stack = styled.div`
  display: flex;
  flex-direction: column;
  align-items: center;
  justify-content: center;
  width: ${(p) => p.$w}px;
  font-size: 14px;
  line-height: 19px;
`;

const SmallStack = styled(Stack)`
  padding-top: 3px;
  font-size: 13px;
  line-height: 22px;
`;

const IconLine = styled.div`
  display: flex;
  align-items: center;
  justify-content: center;
  gap: ${(p) => p.$gap || 10}px;
  height: 19px;
`;

const Meter = styled.i`
  width: 81px;
  height: 7px;
  margin-bottom: 1px;
  background: linear-gradient(90deg, ${(p) => (p.$lit ? '#4aa9cf' : '#2d3034')} 7%, #2d3034 7%, #2d3034 92%, #1f2023 92%);
`;

const TransportKeys = styled.div`
  display: flex;
  align-items: center;
  gap: 20px;
  width: 233px;
  margin-left: 482px;
`;

const Locator = styled.div`
  display: grid;
  grid-template-columns: 19px 1fr;
  width: 142px;
  line-height: 19px;
  font-size: 16px;
  color: #dadcde;
  & > b { color: #3f7ba6; font-weight: normal; }
`;

const Value = styled.span`
  font-size: 16px;
  color: #dadcde;
  white-space: nowrap;
`;

const MeterPair = styled.div`
  display: flex;
  flex-direction: column;
  gap: 9px;
  margin-left: 16px;
`;

const ViewButtons = styled.div`
  display: flex;
  margin-left: 12px;
`;

const ViewButton = styled.button`
  width: ${(p) => p.$w || 69}px;
  background: ${(p) => (p.$active ? '#3594d7' : '#5d6269')};
  border-left: 1px solid #484c52;
  color: #dcdee0;
  font-size: 16px;
`;

/* ---------- overlays ---------- */

const ContextMenu = styled.div`
  position: absolute;
  top: 10px;
  left: 233px;
  width: 474px;
  border: 1px solid #c6c6c6;
  padding: 0 2px;
  background: #f1f1f1;
  color: #000;
  font: 600 15px/20px ${systemFont};
`;

const MenuScroll = styled.button`
  display: flex;
  align-items: center;
  width: 100%;
  height: 24px;
  padding-left: 23px;
`;

const MenuGroup = styled.ul`
  & + & { padding-top: 7px; background: linear-gradient(#d3d3d3, #d3d3d3) 37px 3px / 100% 1px no-repeat; }
`;

const MenuEntry = styled.button`
  display: flex;
  align-items: center;
  width: 100%;
  height: 31px;
  padding: 0 20px 0 3px;
  gap: 12px;
  text-align: left;
  background: ${(p) => (p.$active ? '#90c8f6' : 'none')};
  color: ${(p) => (p.disabled ? '#747474' : '#000')};
`;

const MenuKeys = styled.span`
  margin-left: auto;
`;

const Frame = styled.div`
  position: absolute;
  border: 3px solid #fe0000;
  pointer-events: none;
  ${(p) => (p.$target === 'menu'
    ? css`top: 18px; left: 173px; width: 69px; height: 35px;`
    : css`top: 290px; left: 228px; width: 484px; height: 45px;`)}
`;

const Badge = styled.div`
  position: absolute;
  top: ${(p) => p.$y}px;
  left: ${(p) => p.$x}px;
  width: 32px;
  height: 32px;
  border: 3px solid #fff;
  border-radius: 50%;
  background: #0000fb;
  box-shadow: 0 0 3px rgba(0, 0, 0, 0.6);
  color: #fff;
  font: bold 18px/26px "DejaVu Sans", sans-serif;
  text-align: center;
`;

const Caption = styled.div`
  position: absolute;
  top: 474px;
  left: 366px;
  color: #0000fb;
  font: bold 48px/54px ${uiFont};
  white-space: nowrap;
  -webkit-text-stroke: 7px #fff;
  paint-order: stroke fill;
  filter: drop-shadow(1px 2px 2px rgba(0, 0, 0, 0.6));
`;

const Pointer = styled.svg`
  position: absolute;
  top: 312px;
  left: 504px;
`;

/* ---------- parts ---------- */

function barOffset(bar) {
  return `${((bar - 1) / TOTAL_BARS) * 100}%`;
}

function TrackHead({ track }) {
  const tone = tones[track.tone];
  return (
    <TrackHeader $tone={tone}>
      <TrackStrip $tone={tone}>
        <svg width="11" height="14" viewBox="0 0 11 14">
          <path d="M0 0h11v14H0z" fill="#000" opacity=".3" />
          <path d="M1 10l3-5 3 5 3-6" fill="none" stroke="#8fb6dc" />
        </svg>
      </TrackStrip>
      <TrackNumber>{track.number}</TrackNumber>
      <TrackBody>
        <TrackRow>
          <ButtonGroup $tone={tone}>
            <GroupButton $tone={tone} aria-label="Mute">M</GroupButton>
            <GroupButton $tone={tone} aria-label="Solo">S</GroupButton>
            <GroupButton $tone={tone} aria-label="Record">
              <svg width="12" height="12"><circle cx="6" cy="6" r="6" fill="#d3d8dd" /></svg>
            </GroupButton>
            <GroupButton $tone={tone} aria-label="Monitor">
              <svg width="12" height="12" viewBox="0 0 12 12">
                <path d="M6 0a5 6 0 0 0 0 12z" fill="#d3d8dd" />
                <path d="M8 1q4 5 0 10" fill="none" stroke="#d3d8dd" strokeWidth="1.500" />
              </svg>
            </GroupButton>
          </ButtonGroup>
          {track.name}
        </TrackRow>
        <Level $tone={tone} />
        <InputRow>
          <SelectBox $bg={tone.field}>
            <Select $h={20} aria-label={`${track.name} input`}><option>{track.input}</option></Select>
            <Triangle color="#b5b9bf" h={7} />
          </SelectBox>
          <RingButton $tone={tone} aria-label="Channel mode"><Rings stereo={track.stereo} color={track.stereo ? '#b4b8bd' : '#fff'} /></RingButton>
        </InputRow>
        <RouteRow $tone={tone}>
          <People size={10} />
          <SelectBox>
            <Select $h={20} $indent={6} aria-label={`${track.name} group`}><option>None</option></Select>
            <Triangle color="#b5b9bf" h={7} />
          </SelectBox>
        </RouteRow>
        <RouteRow $tone={tone}>
          <Blocks />
          <SelectBox>
            <Select $h={20} $indent={6} aria-label={`${track.name} channel`}><option>{track.output}</option></Select>
            <Triangle color="#b5b9bf" h={7} />
          </SelectBox>
        </RouteRow>
      </TrackBody>
    </TrackHeader>
  );
}

function AudioClip({ clip, tone, selected, seed }) {
  const [start, end] = clip.span;
  return (
    <Clip
      $tone={tone}
      $selected={selected}
      style={{ left: barOffset(clip.from), width: `${((clip.to - clip.from) / TOTAL_BARS) * 100}%` }}
    >
      <Wave viewBox={`${start} 0 ${end - start} 145`} preserveAspectRatio="none">
        {clip.centers.map((c, i) => (
          <g key={c}>
            <path d={envelopePath(clip.wave, c, clip.cap, seed + i * 77)} fill={tone.wave} />
            <path d={`M${start} ${c}H${end}`} stroke={tone.line} strokeWidth="1" opacity=".7" />
          </g>
        ))}
      </Wave>
      {selected && ['top', 'left', 'right', 'fadeIn', 'fadeOut'].map((at) => <Handle key={at} $at={at} />)}
    </Clip>
  );
}

function ArrangeView() {
  return (
    <Arrange>
      <TrackList>
        <TrackTools>
          <PlainButton aria-label="Track list"><Bars /></PlainButton>
          <PlainButton aria-label="Inspector">
            <svg width="5" height="19"><path d="M0 0h5v4H0zM0 6h5v13H0z" fill="#a9abad" /></svg>
          </PlainButton>
          <ToolPair>
            <PlainButton aria-label="Options"><Wrench /></PlainButton>
            <PlainButton aria-label="Automation">
              <svg width="30" height="20" viewBox="0 0 30 20">
                <path d="M2 17Q4 4 13 2.500L20 17 28 2" fill="none" stroke="#b4b6b8" strokeWidth="1.500" />
                <g fill="#d0d2d4">
                  <circle cx="2" cy="17" r="2" />
                  <circle cx="13" cy="2.500" r="2" />
                  <circle cx="20" cy="17" r="2" />
                  <circle cx="28" cy="2" r="2" />
                </g>
              </svg>
            </PlainButton>
          </ToolPair>
        </TrackTools>
        {tracks.map((t) => <TrackHead key={t.number} track={t} />)}
        <TrackFill />
        <TrackFooter>
          <FooterButton>M</FooterButton>
          <FooterButton>S</FooterButton>
          <FooterButton aria-label="Power">
            <svg width="14" height="13" viewBox="0 0 14 13">
              <path d="M3 2a5.500 5 0 1 0 8 0M7 0v6" fill="none" stroke="#3794dd" strokeWidth="2.200" />
            </svg>
          </FooterButton>
          <FooterTab>Medium</FooterTab>
        </TrackFooter>
      </TrackList>
      <Timeline>
        <Ruler>
          {Array.from({ length: 20 }, (_, i) => <RulerCell key={i}>{i * 8 + 1}</RulerCell>)}
        </Ruler>
        <LaneRow>
          <Lanes>
            {tracks.map((t) => <Lane key={t.number} $selected={t.tone === 'vox'} />)}
            <GridLines>
              {Array.from({ length: 38 }, (_, i) => (
                <line key={i} x1={barOffset(i * 4 + 1)} x2={barOffset(i * 4 + 1)} y1="0" y2="100%" stroke="#383a3d" strokeWidth="2" />
              ))}
            </GridLines>
            {tracks.map((t, i) => (
              <ClipLayer key={t.number} $index={i}>
                {t.clips.map((c, n) => (
                  <AudioClip key={c.from} clip={c} tone={tones[t.tone]} selected={t.tone === 'vox'} seed={i * 31 + n * 7 + 5} />
                ))}
              </ClipLayer>
            ))}
          </Lanes>
          <ScrollColumn>
            <Triangle dir="up" color="#77797c" h={7} />
            <Triangle color="#77797c" h={7} />
          </ScrollColumn>
        </LaneRow>
        <TimelineFooter>
          <Triangle dir="right" w={10} h={10} color="#77797c" />
          <ZoomOut aria-label="Zoom out"><Triangle dir="up" w={11} h={8} color="#66686b" /></ZoomOut>
          <ZoomSlider type="range" defaultValue="0" aria-label="Zoom" />
          <Triangle dir="up" w={17} h={12} color="#66686b" />
          <svg width="20" height="18"><path d="M12 1h8v3h-8zM12 6h8v3h-8zM4 12h5v2H4zM4 16h5v2H4z" fill="#595b5f" /></svg>
        </TimelineFooter>
      </Timeline>
    </Arrange>
  );
}

const scaleMarks = [['6', 13], ['-3', 27], ['-9', 39], ['-24', 69], ['-36', 93], ['-48', 117], ['-60', 138]];

function MainStrip() {
  return (
    <MainChannel>
      <OutputBox>
        <OutputName>Front L/R +</OutputName>
        <Pair $bg="#202225" $line={21}>
          <PeakValue>-∞</PeakValue>
          <PeakValue>-∞</PeakValue>
        </Pair>
        <Pair $line={22}>
          <Volume>0dB</Volume>
          <Muted>0</Muted>
        </Pair>
      </OutputBox>
      <MainButtons>
        <ButtonLine>
          <MainButton>M</MainButton>
          <MainButton>S</MainButton>
        </ButtonLine>
        <ButtonLine>
          <MainButton $grow="0 0 31px" $active aria-label="Click"><Metronome color="#fff" /></MainButton>
          <MainButton $grow="0 0 20px" aria-label="Fader"><svg width="8" height="14"><path d="M3 0h2v3h3v3H0V3h3zM0 7h8v3H5v4H3v-4H0z" fill="#a9abad" /></svg></MainButton>
          <MainButton aria-label="Mono"><Rings color="#a9abad" /></MainButton>
        </ButtonLine>
      </MainButtons>
      <FaderArea>
        <svg width="100" height="156" viewBox="0 0 100 156">
          <path d="M11 0h14v4H11z" fill="#5cb8ee" />
          <path d="M11 5h14v4H11zM11 10h6v4h-6zM18 10h7v4h-7z" fill="#505256" />
          <path d="M11 95h8v14h-8z" fill="#a9abad" />
          <path d="M20 95h8v14h-8z" fill="#63656a" />
          <circle cx="21" cy="136" r="8" fill="#a9abad" />
          <path d="M14 129l7 7" stroke="#27292c" strokeWidth="2.500" />
          <path d="M40 70h18v81H40z" fill="#55575b" />
          <path d="M41 76h16M41 90h16M41 105h16M41 115h16M41 123h16" stroke="#77797c" />
          <path d="M49 20v110" stroke="#17191b" strokeWidth="2" />
          <defs>
            <linearGradient id="cap" x2="0" y2="1">
              <stop offset="0" stopColor="#3b8fb8" />
              <stop offset=".08" stopColor="#59a9cf" />
              <stop offset=".5" stopColor="#4a9dc6" />
              <stop offset=".9" stopColor="#5aaed6" />
              <stop offset="1" stopColor="#2e7da6" />
            </linearGradient>
          </defs>
          <rect x="38" y="25" width="22" height="46" rx="2" fill="url(#cap)" stroke="#16242d" />
          <path d="M39 29h20M39 67h20" stroke="#26698c" />
          <path d="M40 48.500h18" stroke="#7b5f55" />
          <path d="M63 15h16v136H63z" fill="#202427" />
          <path d="M65 18.500h12M65 42.500h12M65 53.500h12M65 76.500h12M65 100.500h12M65 122.500h12M65 146.500h12" stroke="#1f4f6b" />
          <path d="M65 30h12" stroke="#777" />
          <g fontSize="10" fontWeight="bold" fill="#a4a6a9" textAnchor="end" fontFamily="Liberation Sans">
            {scaleMarks.map(([label, y]) => <text key={label} x="98" y={y + 12}>{label}</text>)}
          </g>
        </svg>
        <FaderInput type="range" defaultValue="80" aria-label="Main volume" />
      </FaderArea>
      <AutoMode>Auto: Off</AutoMode>
      <MainName>Main</MainName>
    </MainChannel>
  );
}

function MixerView() {
  return (
    <Mixer>
      <SideColumn>
        <SideHead>
          <PlainButton aria-label="Close">
            <svg width="14" height="14" viewBox="0 0 15 14"><path d="M2 1l11 12M13 1L2 13" stroke="#b4b6b8" strokeWidth="3.500" /></svg>
          </PlainButton>
          <PlainButton aria-label="Detach">
            <svg width="13" height="13" viewBox="0 0 13 13"><path d="M2 0h11v11l-3.500-3L3 13 0 10l6-6z" fill="#b4b6b8" /></svg>
          </PlainButton>
        </SideHead>
        <SideSplit>
          <IoButton>I/O</IoButton>
          <IoList aria-label="I/O list"><Triangle /></IoList>
        </SideSplit>
        <SideCell $h={27} aria-label="Mixer options"><Wrench size={13} color="#b4b6b8" /></SideCell>
        <SideGap />
        <SideCell $h={33} aria-label="Height">
          <svg width="12" height="22"><path d="M0 9h12L6 0zM0 13h12l-6 9z" fill="#b4b6b8" /></svg>
        </SideCell>
        <SideCell $h={32} aria-label="Width">
          <svg width="24" height="12"><path d="M0 0v12l10-6zM24 0v12l-10-6z" fill="#b4b6b8" /></svg>
        </SideCell>
        <SideCell>Inputs</SideCell>
        <SideCell>Outputs</SideCell>
        <SideCell>External</SideCell>
        <SideCell>Instr.</SideCell>
        <SideCell aria-label="Banks">
          <svg width="22" height="17" viewBox="0 0 22 17">
            <path d="M4 3.500V2.500h15.500v10M2 5.500V4.500h15.500v10" fill="none" stroke="#8d8f92" />
            <path d="M6 .5h15.500v10" fill="none" stroke="#a9abad" />
            <path d="M0 6h16v11H0zM2 8v7h2V8zM6 8v7h1.500V8zM9 8v7h1.500V8zM12.500 8v7H14V8z" fill="#a9abad" fillRule="evenodd" />
          </svg>
        </SideCell>
        <SideCell aria-label="Groups"><People size={15} color="#a9abad" /></SideCell>
        <SideCell $bg="#2d87c8" aria-label="Channel list"><Bars color="#fff" /></SideCell>
      </SideColumn>
      <ChannelColumn>
        <ChannelHead>Channels</ChannelHead>
        {tracks.map((t) => (
          <ChannelRow key={t.number} $selected={t.tone === 'vox'}>
            <ChannelNumber>{t.number}</ChannelNumber>
            <svg width="30" height="10" viewBox="0 0 30 10">
              <circle cx="4" cy="5" r="4" fill="#e2e3e4" />
              <path d="M16.500 5q4-5 7 0 4 3 6.500 0M17 4l3-2 3 3zM24 6l3 2 3-3z" fill="#c9cbcd" stroke="#c9cbcd" />
            </svg>
            <ChannelColor $color={tones[t.tone].strip} />
            {t.name}
          </ChannelRow>
        ))}
        <Filter placeholder="Filter" aria-label="Filter channels" />
        <ChannelTabs>
          <ChannelTab $active aria-label="Audio"><WaveMark /></ChannelTab>
          <ChannelTab aria-label="Instruments">
            <svg width="13" height="11"><path d="M0 0h2v7h2V0h1v7h3V0h1v7h2V0h2v11H0z" fill="#6a6c70" /></svg>
          </ChannelTab>
          <ChannelTab>FX</ChannelTab>
          <ChannelTab aria-label="Bus">
            <svg width="14" height="10"><path d="M0 1h6v8H0M0 5h14" fill="none" stroke="#6a6c70" strokeWidth="2" /></svg>
          </ChannelTab>
          <ChannelTab aria-label="VCA">
            <svg width="14" height="12"><path d="M2 0h1v5h2v3H3v4H2V8H0V5h2zM11 2h3v4h-2v6h-1V6H9V2z" fill="#6a6c70" /></svg>
          </ChannelTab>
          <ChannelTab>A</ChannelTab>
        </ChannelTabs>
      </ChannelColumn>
      <MixerSpace><Triangle dir="right" w={9} h={10} color="#77797c" /></MixerSpace>
      <MainStrip />
    </Mixer>
  );
}

function TransportBar() {
  return (
    <Transport>
      <TransportFace>
        <SmallStack $w={32}>
          <svg width="34" height="19" viewBox="0 0 34 19">
            <path d="M0 5l4 4-4 4zM30 5l4 4-4 4z" fill="#4b4d50" />
            <circle cx="17" cy="9" r="8" fill="none" stroke="#77797c" strokeWidth="1.500" />
            <g fill="#77797c">
              <circle cx="13" cy="6" r="1.500" />
              <circle cx="17" cy="4" r="1.500" />
              <circle cx="21" cy="6" r="1.500" />
              <circle cx="12.500" cy="10" r="1.500" />
              <circle cx="21.500" cy="10" r="1.500" />
            </g>
          </svg>
          MIDI
        </SmallStack>
        <SmallStack $w={109}>
          <Meter $lit />
          <Meter />
          Performance
        </SmallStack>
        <TransportKeys>
          <PlainButton aria-label="Return to zero">
            <svg width="16" height="16"><path d="M0 0h2v16H0zM16 0v16L3 8z" fill="#d2d4d6" /></svg>
          </PlainButton>
          <PlainButton aria-label="Stop"><svg width="27" height="26"><path d="M1 0h26v26H1z" fill="#2eb0d8" /></svg></PlainButton>
          <PlainButton aria-label="Play"><svg width="23" height="26"><path d="M1 0l22 13L1 26z" fill="#d2d4d6" /></svg></PlainButton>
          <PlainButton aria-label="Record"><svg width="26" height="26"><circle cx="13" cy="13" r="13" fill="#c6c7c9" /></svg></PlainButton>
          <PlainButton aria-label="Loop">
            <svg width="40" height="26" viewBox="0 0 40 26">
              <path d="M10 24Q1 22 1.500 12 2 2 11 1.500H29Q38 2 38.500 12 38 24 27 24.500H22L27 13M10 24.500Q17 25 19 13" fill="none" stroke="#97999c" strokeWidth="2.500" />
            </svg>
          </PlainButton>
        </TransportKeys>
        <Locator>
          <b>L</b><span>00001.01.01.00</span>
          <b>R</b><span>00001.01.01.00</span>
        </Locator>
        <Stack $w={73}><Value>Off</Value>Sync</Stack>
        <Stack $w={53}>
          <IconLine $gap={12}>
            <svg width="21" height="10"><path d="M0 2h6l8 6h7" fill="none" stroke="#77797c" strokeWidth="1.500" /></svg>
            <svg width="18" height="12"><path d="M1 0v12M4 6h4M8 2h9v7H8z" stroke="#77797c" fill="#77797c" /></svg>
          </IconLine>
          <IconLine $gap={15}>
            <svg width="14" height="14" viewBox="0 0 14 14">
              <circle cx="7" cy="7" r="4" fill="none" stroke="#85878a" strokeWidth="2.500" />
              <path d="M7 0v3M7 11v3M0 7h3M11 7h3M2 2l2 2M10 10l2 2M12 2l-2 2M4 10l-2 2" stroke="#85878a" strokeWidth="2" />
            </svg>
            <svg width="20" height="12"><path d="M0 6h5M15 6h5M5 1v10M15 1v10M6 3h8v6H6z" stroke="#85878a" fill="#85878a" /></svg>
          </IconLine>
        </Stack>
        <Stack $w={97}>
          <IconLine $gap={13}>
            <svg width="12" height="12"><circle cx="6" cy="6" r="6" fill="#6b7371" /></svg>
            <Wrench size={13} color="#85878a" />
            <Metronome color="#85878a" size={13} />
          </IconLine>
          Metronome
        </Stack>
        <Stack $w={57}><Value>4 /4</Value>Timing</Stack>
        <Stack $w={54}><Value>-</Value>Key</Stack>
        <Stack $w={62}><Value>120.00</Value>Tempo</Stack>
        <MeterPair>
          <svg width="112" height="12"><path d="M0 0h84v5H0zM0 6h84v5H0z" fill="#303338" /><path d="M85 0h27v11H85z" fill="#1d1e20" /></svg>
          <svg width="112" height="12">
            {Array.from({ length: 42 }, (_, i) => <rect key={i} x={i * 2} width="1" height="11" fill={i < 30 ? '#4f9cbd' : '#3a3d42'} />)}
            <path d="M61 0h2v11h-2z" fill="#b8d9e6" />
            <circle cx="98" cy="6" r="5.500" fill="#44b3dc" />
            <circle cx="106" cy="6" r="4.500" fill="none" stroke="#44b3dc" strokeWidth="2" />
          </svg>
        </MeterPair>
      </TransportFace>
      <ViewButtons>
        <ViewButton $w={70}>Edit</ViewButton>
        <ViewButton $active>Mix</ViewButton>
        <ViewButton $w={83}>Browse</ViewButton>
      </ViewButtons>
    </Transport>
  );
}

function MainToolbar() {
  return (
    <Toolbar>
      <ParameterBox>
        <ParameterTitle>
          <svg width="17" height="15" viewBox="0 0 17 15">
            <path d="M.5.5h16v14H.5z" fill="none" stroke="#8d8f92" />
            <path d="M4 12l4.500-9 4.500 9M6 9h5" fill="none" stroke="#a9abad" strokeWidth="2" />
          </svg>
          <svg width="17" height="15" viewBox="0 0 17 15">
            <path d="M0 7l2-.5 3 3L4 2l1.500-.5L7.500 7 8 0h1.800L10.500 7l2-5.500L14 2l-1.500 6L15.500 5l1.500.8L14 12l-2 3H7z" fill="#b9bbbd" />
          </svg>
          <span>&nbsp;Sensitivity</span>
        </ParameterTitle>
        <ParameterRow>
          <span>3 - RX 9 M..lick</span>
          <Push>7.00</Push>
          <Triangle w={12} h={8} color="#d0d2d4" />
        </ParameterRow>
      </ParameterBox>
      <ToolStrip>
        <svg width="22" height="26" viewBox="0 0 22 26">
          <path d="M0 13h10M12 8q6 0 9 5-3 5-9 5z" fill="#fff" stroke="#fff" strokeWidth="2" />
          <path d="M9.500 0v26" stroke="#333" strokeWidth="4" />
          <path d="M9.500 0v26" stroke="#fff" strokeWidth="2" strokeDasharray="3 2" />
        </svg>
        <svg width="18" height="22" viewBox="1 0 18 22">
          <circle cx="9.500" cy="10" r="7.500" fill="none" stroke="#fff" strokeWidth="2.500" />
          <path d="M11 14l7 6" stroke="#fff" strokeWidth="2.500" />
        </svg>
        <svg width="30" height="30" viewBox="0 0 30 30">
          <path d="M9 1h8l4 3v6H9zM1 19q3-3 6-3l4-4h8l4 4q3 0 6 3l-2 2q-3-2-5-2l-3-2h-8l-3 2q-3 0-5 2zM9 21h12l-4 8h-5z" fill="#fff" stroke="#33363a" />
          <path d="M12 3v5M15 4v4M17 5v3" stroke="#33363a" strokeWidth="1.500" />
        </svg>
      </ToolStrip>
      <SnapStrip>
        <IqMark>IQ</IqMark>
        {[['Quantize', '1/16'], ['Timebase', 'Bars'], ['Snap', 'Adaptive']].map(([name, value]) => (
          <Field key={name}>
            <FieldName>{name}</FieldName>
            <SelectBox $bg="#5a5f66" $caret={8}>
              <Select $h={25} $indent={4}><option>{value}</option></Select>
              <Triangle color="#9b9da0" w={10} h={7} />
            </SelectBox>
          </Field>
        ))}
        <SnapTools>
          <svg width="30" height="30" viewBox="0 0 30 30">
            <path d="M2 1v28" stroke="#222" strokeWidth="4" />
            <path d="M2 1v28" stroke="#eee" strokeWidth="2" />
            <path d="M11 12h18v7H11z" fill="#eee" stroke="#222" />
            <path d="M14 15h12v2H14z" fill="#222" />
          </svg>
          <svg width="22" height="18" viewBox="0 0 22 18">
            <path d="M1 1v16M4 1v16M7 1v16" stroke="#e2e2e2" strokeWidth="1.500" strokeDasharray="2 1" />
            <path d="M11 1h10v16H11z" fill="#fff" stroke="#222" />
            <path d="M18 4v10l-5-5z" fill="#222" />
          </svg>
        </SnapTools>
      </SnapStrip>
      <SnapToggle aria-label="Snap">
        <svg width="24" height="30" viewBox="0 0 24 30">
          <path d="M21 1v28" stroke="#222" strokeWidth="4" />
          <path d="M1 10h10V5l9 10-9 9v-5H1z" fill="#fff" stroke="#222" />
          <path d="M21 1v28" stroke="#fff" strokeWidth="2" />
        </svg>
      </SnapToggle>
      <SnapSplit aria-label="Snap to zero crossings">
        <svg width="18" height="30" viewBox="0 0 18 30">
          <path d="M9 0v30" stroke="#222" strokeWidth="4" />
          <path d="M9 1v28" stroke="#fff" strokeWidth="2" />
          <path d="M6 9v10l-5-5zM12 9v10l5-5z" fill="#fff" stroke="#222" />
        </svg>
      </SnapSplit>
      <ToolCell $w={61} $pl={21} aria-label="Grid">
        <svg width="28" height="24" viewBox="0 0 28 24">
          <path d="M0 0h14v24H0z" fill="#333" />
          <path d="M1 1h5v6H1zM8 1h5v6H8zM1 9h5v6H1zM8 9h5v6H8zM1 17h5v6H1zM8 17h5v6H8z" fill="#fff" />
          <path d="M15 1h5v6h-5zM21 1h5v6h-5zM15 17h5v6h-5zM21 17h5v6h-5z" fill="#a2a5a9" />
          <circle cx="21.500" cy="12" r="6" fill="#fff" stroke="#333" />
          <path d="M18 12h7M21.500 8.500v7" stroke="#333" strokeWidth="1.500" />
        </svg>
      </ToolCell>
      <ToolCell $w={20} aria-label="Grid options"><Triangle w={12} color="#d4d6d8" /></ToolCell>
      <ToolSpace>
        <svg width="20" height="25" viewBox="0 0 20 25">
          <path d="M0 0h20v25H0z" fill="#fff" stroke="#333" />
          <path d="M5 2h10v9H5zM5 14h10v9H5z" fill="#5d646c" stroke="#333" strokeWidth="2" />
          <path d="M2.500 2v22M17.500 2v22" stroke="#333" strokeWidth="2" strokeDasharray="2 2.500" />
        </svg>
      </ToolSpace>
      <ToolCell $w={76}>Start</ToolCell>
      <ToolCell $w={77}>Song</ToolCell>
      <ToolCell $w={20} aria-label="Song list"><Triangle w={12} color="#d4d6d8" /></ToolCell>
      <ToolCell $w={82}>Project</ToolCell>
      <ToolCell $w={19} aria-label="Project list" />
      <ToolCell $w={82}>Show</ToolCell>
      <ToolCell $w={19} aria-label="Show list" />
    </Toolbar>
  );
}

function EventMenu() {
  return (
    <ContextMenu role="menu" aria-label="Event">
      <MenuScroll aria-label="Scroll up"><Triangle dir="up" w={13} h={7} color="#9b9b9b" /></MenuScroll>
      {menuGroups.map((group) => (
        <MenuGroup key={group[0].label}>
          {group.map((item) => (
            <li key={item.label}>
              <MenuEntry role="menuitem" $active={item.active} disabled={item.disabled}>
                <MenuIcon name={item.icon} />
                <span>{item.label}</span>
                {item.keys && <MenuKeys>{item.keys}</MenuKeys>}
              </MenuEntry>
            </li>
          ))}
        </MenuGroup>
      ))}
      <MenuScroll aria-label="Scroll down"><Triangle w={13} h={7} color="#000" /></MenuScroll>
    </ContextMenu>
  );
}

function App() {
  return (
    <Screen>
      <GlobalStyle />
      <TitleBar>
        <svg width="18" height="18" viewBox="0 0 18 18">
          <path d="M0 0h18v18H0z" fill="#14181f" />
          <path d="M1 14q8 0 9-6 2-4 8-5" fill="none" stroke="#2d3743" strokeWidth="3" />
          <path d="M0 12l8 1 5 4" fill="none" stroke="#1c66b5" strokeWidth="2" />
        </svg>
        <span>Studio One - <SongName>마음을 드려요*</SongName></span>
        <WindowButtons>
          <PlainButton aria-label="Minimize"><svg width="12" height="12"><path d="M1 5.500h10" stroke="#000" /></svg></PlainButton>
          <PlainButton aria-label="Restore">
            <svg width="12" height="12"><path d="M.5 2.500h8v9h-8zM2.500 2.500v-2h9v9h-3" fill="none" stroke="#000" /></svg>
          </PlainButton>
          <PlainButton aria-label="Close"><svg width="12" height="12"><path d="M0 0l12 12M12 0L0 12" stroke="#000" /></svg></PlainButton>
        </WindowButtons>
      </TitleBar>
      <MenuBar>
        {['File', 'Edit', 'Song', 'Track'].map((m) => <MenuBarItem key={m}>{m}</MenuBarItem>)}
        <MenuBarItem $open>Event</MenuBarItem>
      </MenuBar>
      <MainToolbar />
      <ArrangeView />
      <MixerView />
      <TransportBar />
      <EventMenu />
      <Frame $target="menu" />
      <Frame $target="entry" />
      <Badge $x={135} $y={17}>1</Badge>
      <Badge $x={190} $y={296}>2</Badge>
      <Caption>Event &gt; Bounce to new track [Ctrl + Alt + B]</Caption>
      <Pointer width="16" height="26" viewBox="0 0 16 26">
        <path d="M.5.5v20l4.500-4 3.500 8 3-1.500L8 15h6.500z" fill="#fff" stroke="#000" />
      </Pointer>
    </Screen>
  );
}

export default App;
